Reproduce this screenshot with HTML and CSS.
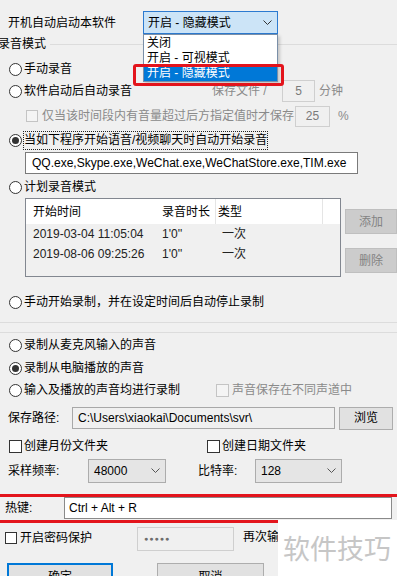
FILE: index.html
```html
<!DOCTYPE html>
<html lang="zh-CN">
<head>
<meta charset="utf-8">
<title>录音设置</title>
<link rel="stylesheet" href="styles.css">
</head>
<body>
<div class="dlg">
  <div class="row r-auto">
    <span class="lbl-auto">开机自动启动本软件</span>
    <div class="combo combo-open">
      <span class="combo-text">开启 - 隐藏模式</span>
      <svg class="chev" width="9" height="5" viewBox="0 0 9 5"><path d="M0.5 0.5 L4.5 4.5 L8.5 0.5" fill="none" stroke="#333" stroke-width="1"/></svg>
      <ul class="droplist">
        <li>关闭</li>
        <li>开启 - 可视模式</li>
        <li class="sel">开启 - 隐藏模式</li>
      </ul>
      <div class="mark"></div>
    </div>
  </div>

  <section class="group g1">
    <div class="legend-row"><span class="legend">录音模式</span><span class="gline"></span></div>
    <div class="row rr r-manual"><span class="radio"></span><span>手动录音</span></div>
    <div class="row rr"><span class="radio"></span><span class="w-start">软件启动后自动录音</span><span class="dis w-save">保存文件 / </span><span class="dbox w5">5</span><span class="dis unit">分钟</span></div>
    <div class="row r-vol"><span class="cb cb-dis"></span><span class="dis w-vol">仅当该时间段内有音量超过后方指定值时才保存</span><span class="dbox w25">25</span><span class="dis pct">%</span></div>
    <div class="row rr r-chat"><span class="radio on"></span><span class="focus">当如下程序开始语音/视频聊天时自动开始录音</span></div>
    <div class="row r-apps"><div class="tbox apps">QQ.exe,Skype.exe,WeChat.exe,WeChatStore.exe,TIM.exe</div></div>
    <div class="row rr r-plan"><span class="radio"></span><span>计划录音模式</span></div>
    <div class="r-list">
      <div class="listview">
        <div class="lv-head">
          <span class="c1">开始时间</span><span class="c2">录音时长</span><span class="c3">类型</span><span class="c4"></span>
        </div>
        <div class="lv-row"><span class="c1">2019-03-04 11:05:04</span><span class="c2">1'0''</span><span class="c3">一次</span></div>
        <div class="lv-row"><span class="c1">2019-08-06 09:25:26</span><span class="c2">1'0''</span><span class="c3">一次</span></div>
      </div>
      <div class="side-btns">
        <span class="btn-dis">添加</span>
        <span class="btn-dis">删除</span>
      </div>
    </div>
    <div class="row rr r-timed"><span class="radio"></span><span>手动开始录制，并在设定时间后自动停止录制</span></div>
  </section>

  <section class="group g2">
    <div class="row rr r-mic"><span class="radio"></span><span>录制从麦克风输入的声音</span></div>
    <div class="row rr r-pc"><span class="radio on"></span><span>录制从电脑播放的声音</span></div>
    <div class="row rr"><span class="radio"></span><span class="w-both">输入及播放的声音均进行录制</span><span class="cb cb-dis"></span><span class="dis ch-lbl">声音保存在不同声道中</span></div>
  </section>

  <div class="row r-path">
    <span class="w-pathlbl">保存路径:</span>
    <div class="tbox path">C:\Users\xiaokai\Documents\svr\</div>
    <span class="btn browse">浏览</span>
  </div>

  <div class="row r-dirs">
    <span class="cb-item w-month"><span class="cb"></span><span>创建月份文件夹</span></span>
    <span class="cb-item"><span class="cb"></span><span>创建日期文件夹</span></span>
  </div>

  <div class="row r-rate">
    <span class="w-rate">采样频率:</span>
    <div class="combo c-rate"><span class="combo-text">48000</span><svg class="chev" width="9" height="5" viewBox="0 0 9 5"><path d="M0.5 0.5 L4.5 4.5 L8.5 0.5" fill="none" stroke="#555" stroke-width="1"/></svg></div>
    <span class="w-bit">比特率:</span>
    <div class="combo c-bit"><span class="combo-text">128</span><svg class="chev" width="9" height="5" viewBox="0 0 9 5"><path d="M0.5 0.5 L4.5 4.5 L8.5 0.5" fill="none" stroke="#555" stroke-width="1"/></svg></div>
  </div>

  <div class="row r-hotkey">
    <span class="w-hot">热键:</span>
    <div class="tbox hot">Ctrl + Alt + R</div>
  </div>

  <div class="row r-pwd">
    <span class="cb-item w-pwd"><span class="cb"></span><span>开启密码保护</span></span>
    <div class="dbox pwd">●●●●●</div>
    <span class="again">再次输入密码:</span>
  </div>

  <div class="row r-btns">
    <span class="btn ok">确定</span>
    <span class="btn cancel">取消</span>
  </div>
</div>
<div class="watermark">软件技巧</div>
</body>
</html>
```

FILE: styles.css
```css
* { box-sizing: border-box; margin: 0; padding: 0; }
html, body { width: 397px; height: 576px; overflow: hidden; }
body {
  position: relative;
  background: #f0f0f0;
  font-family: "Liberation Sans", "Noto Sans CJK SC", sans-serif;
  font-size: 12px;
  line-height: 16px;
  color: #000;
}
ul { list-style: none; }
.dlg { padding-top: 11px; }
.row { display: flex; align-items: center; height: 22px; white-space: nowrap; flex: none; }

/* top autostart row */
.r-auto { height: 23px; padding-left: 8px; }
.lbl-auto { width: 135px; }
.combo {
  position: relative;
  display: flex; align-items: center;
  height: 23px;
  border: 1px solid #adadad;
  background: #e1e1e1;
  padding-left: 4px;
}
.combo-text { flex: 1; }
.chev { flex: none; margin-right: 5px; }
.combo-open { width: 135px; border-color: #2c7ad0; background: #cce4f7; }
.droplist {
  position: absolute; left: -1px; top: 22px;
  width: 135px;
  background: #fff;
  border: 1px solid #7a8fa8;
  padding-top: 1px;
  box-shadow: 2px 2px 3px rgba(0,0,0,0.18);
  z-index: 2;
}
.droplist li { height: 15px; line-height: 15px; padding-left: 3px; }
.droplist li.sel { background: #0078d7; color: #fff; }
.mark {
  position: absolute; left: -11px; top: 52px;
  width: 151px; height: 22px;
  border: 3px solid #e3141c;
  border-radius: 3px;
  z-index: 3;
}

/* group boxes */
.group { border-bottom: 1px solid #dcdcdc; }
.g1 { padding-bottom: 9px; }
.g2 { margin-top: 9px; border-top: 1px solid #dcdcdc; border-bottom: none; }
.legend-row { display: flex; align-items: center; height: 20px; }
.legend { margin-left: -2px; padding-right: 4px; }
.gline { flex: 1; height: 1px; background: #dcdcdc; }

/* radio & checkbox */
.radio {
  flex: none;
  width: 13px; height: 13px;
  margin-left: 9px; margin-right: 2px;
  border: 1px solid #333;
  border-radius: 50%;
  background: #fff;
  display: flex; align-items: center; justify-content: center;
}
.radio.on::after { content: ""; width: 7px; height: 7px; border-radius: 50%; background: #333; }
.cb { flex: none; width: 13px; height: 13px; border: 1px solid #333; background: #fff; }
.cb-dis { border-color: #c4c4c4; background: #f4f4f4; }
.cb-item { display: flex; align-items: center; gap: 2px; }
.dis { color: #8a8a8a; }

.r-manual { margin-top: 4px; }
.w-start { width: 188px; }
.w-save { width: 70px; }
.dbox {
  display: flex; align-items: center; justify-content: center;
  height: 22px;
  border: 1px solid #cfcfcf;
  background: #f0f0f0;
  color: #7a7a7a;
}
.w5 { width: 33px; }
.unit { margin-left: 4px; }

.r-vol { margin-top: 3px; padding-left: 26px; }
.r-vol .cb { width: 12px; height: 12px; margin-right: 4px; }
.w-vol { width: 253px; }
.w25 { width: 35px; height: 21px; }
.pct { margin-left: 8px; }

.r-chat { margin-top: 2px; }
.focus { border: 1px dotted #222; height: 19px; line-height: 17px; margin-left: -1px; }

.r-apps { margin-top: 1px; padding-left: 25px; }
.tbox {
  display: flex; align-items: center;
  height: 22px;
  border: 1px solid #7a7a7a;
  background: #fff;
  padding-left: 6px;
  overflow: hidden;
}
.apps { width: 333px; }

.r-plan { margin-top: 2px; }

/* list view */
.r-list { display: flex; padding-left: 25px; height: 79px; }
.listview {
  width: 320px; height: 79px;
  border: 1px solid #828790;
  background: #f0f0f0;
}
.lv-head { display: flex; height: 25px; background: #fff; align-items: stretch; }
.lv-head span { display: flex; align-items: center; }
.lv-row { display: flex; height: 20px; align-items: center; color: #222; }
.c1 { width: 131px; padding-left: 7px; }
.c2 { width: 58px; padding-left: 5px; }
.c3 { width: 107px; padding-left: 3px; }
.lv-head .c3 { border-left: 1px solid #e5e5e5; padding-left: 2px; }
.lv-row .c3 { padding-left: 7px; }
.c4 { flex: 1; border-left: 1px solid #e5e5e5; }
.side-btns { display: flex; flex-direction: column; gap: 14px; margin-left: 4px; margin-top: 11px; }
.btn-dis {
  display: flex; align-items: center; justify-content: center;
  width: 52px; height: 25px;
  background: #cccccc;
  border: 1px solid #bfbfbf;
  color: #838383;
}

.r-timed { margin-top: 14px; }

.r-mic { margin-top: 1px; }
.r-pc { margin-top: 1px; }
.w-both { width: 192px; }
.ch-lbl { margin-left: 3px; }

/* path */
.r-path { margin-top: 5px; height: 24px; padding-left: 8px; }
.w-pathlbl { width: 64px; }
.path { width: 263px; background: #f0f0f0; border-color: #a8a8a8; padding-left: 5px; }
.btn {
  display: flex; align-items: center; justify-content: center;
  background: #e1e1e1;
  border: 1px solid #adadad;
}
.browse { width: 54px; height: 23px; margin-left: 4px; }

.r-dirs { margin-top: 5px; padding-left: 9px; }
.w-month { width: 198px; }

.r-rate { margin-top: 1px; height: 25px; padding-left: 8px; }
.w-rate { width: 80px; }
.c-rate { width: 78px; height: 24px; padding-left: 5px; background: #e5e5e5; border-color: #acacac; }
.w-bit { width: 57px; margin-left: 32px; }
.c-bit { width: 87px; height: 24px; padding-left: 5px; background: #e5e5e5; border-color: #acacac; }

.r-hotkey {
  margin-top: 11px;
  height: 29px;
  padding-left: 5px;
  border-top: 3px solid #e3141c;
  border-bottom: 3px solid #e3141c;
  align-items: flex-start;
}
.w-hot { width: 59px; line-height: 22px; }
.hot { width: 328px; height: 22px; border-color: #8a8a8a; padding-left: 4px; }

.r-pwd { margin-top: 4px; height: 24px; padding-left: 5px; }
.w-pwd { width: 132px; gap: 3px; align-self: flex-start; margin-top: 3px; }
.w-pwd .cb { width: 12px; height: 12px; }
.pwd { width: 97px; height: 24px; justify-content: flex-start; padding-left: 6px; font-size: 7px; letter-spacing: 1px; color: #6d6d6d; }
.again { margin-left: 9px; width: 35px; overflow: hidden; align-self: flex-start; margin-top: 2px; }

.r-btns { margin-top: 12px; height: 28px; padding-left: 7px; align-items: flex-start; }
.ok { width: 106px; height: 28px; border: 2px solid #0078d7; }
.cancel { width: 107px; height: 28px; margin-left: 44px; }

.watermark {
  position: absolute; left: 278px; top: 520px; right: 0; bottom: 0;
  background: #fff;
  color: #c6c6c6;
  font-family: "Noto Sans CJK SC", sans-serif;
  font-size: 27px;
  line-height: 30px;
  padding: 13px 0 0 5px;
  white-space: nowrap;
}
```
